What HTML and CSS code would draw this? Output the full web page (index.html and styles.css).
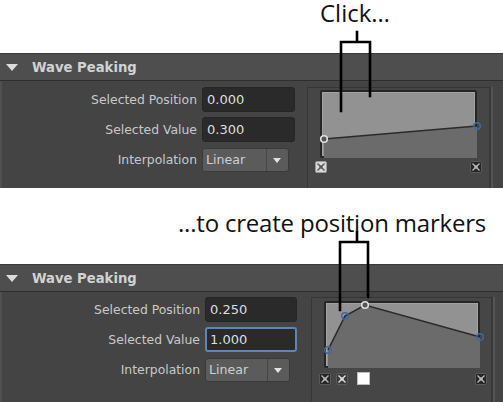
FILE: index.html
```html
<!DOCTYPE html>
<html lang="en">
<head>
  <meta charset="UTF-8">
  <title>Wave Peaking - position markers</title>
  <link rel="stylesheet" href="styles.css">
</head>
<body>

  <section class="shot shot-click">
    <p class="callout">Click…</p>

    <div class="panel">
      <div class="panel-head">
        <span class="caret"></span>
        <span class="panel-title">Wave Peaking</span>
      </div>
      <div class="panel-body">
        <div class="fields">
          <label>Selected Position</label>
          <div class="field">0.000</div>
          <label>Selected Value</label>
          <div class="field">0.300</div>
          <label>Interpolation</label>
          <div class="dropdown"><span>Linear</span><i class="dd-arrow"></i></div>
        </div>

        <div class="ramp-frame">
          <div class="ramp">
            <svg viewBox="0 0 153 64" width="153" height="64">
              <polygon points="0,45 153,32 153,64 0,64" fill="#6b6b6b"/>
              <polyline points="0,45 153,32" fill="none" stroke="#2b2b2b" stroke-width="1.6"/>
              <circle cx="0" cy="45" r="3.3" fill="#555" stroke="#e0e0e0" stroke-width="1.6"/>
              <circle cx="153" cy="32" r="3.3" fill="none" stroke="#3d6b9e" stroke-width="1.4"/>
            </svg>
          </div>
          <div class="ramp-tools">
            <svg class="tool tool-light" viewBox="0 0 12 12"><rect x="0.5" y="0.5" width="11" height="11" rx="1.5"/><path d="M2.5 2.5 L9.5 9.5 M9.5 2.5 L2.5 9.5"/><rect class="dot" x="4.5" y="4.5" width="3" height="3"/></svg>
            <svg class="tool" viewBox="0 0 12 12"><rect x="0.5" y="0.5" width="11" height="11" rx="1.5"/><path d="M2.5 2.5 L9.5 9.5 M9.5 2.5 L2.5 9.5"/><rect class="dot" x="4.5" y="4.5" width="3" height="3"/></svg>
          </div>
        </div>
      </div>
    </div>

    <svg class="bracket" width="503" height="200">
      <path d="M357 32 V42 M341 111 V42 H370 V96"/>
    </svg>
  </section>

  <section class="shot shot-markers">
    <p class="callout">...to create position markers</p>

    <div class="panel">
      <div class="panel-head">
        <span class="caret"></span>
        <span class="panel-title">Wave Peaking</span>
      </div>
      <div class="panel-body">
        <div class="fields">
          <label>Selected Position</label>
          <div class="field">0.250</div>
          <label>Selected Value</label>
          <div class="field focused">1.000</div>
          <label>Interpolation</label>
          <div class="dropdown"><span>Linear</span><i class="dd-arrow"></i></div>
        </div>

        <div class="ramp-frame">
          <div class="ramp">
            <svg viewBox="0 0 152 63" width="152" height="63">
              <polygon points="0,45 17,11 37,0 152,32 152,63 0,63" fill="#6b6b6b"/>
              <polyline points="0,45 17,11 37,0 152,32" fill="none" stroke="#2b2b2b" stroke-width="1.6"/>
              <circle cx="0" cy="45" r="3.3" fill="none" stroke="#3d6b9e" stroke-width="1.4"/>
              <circle cx="17" cy="11" r="3.3" fill="none" stroke="#3d6b9e" stroke-width="1.4"/>
              <circle cx="152" cy="32" r="3.3" fill="none" stroke="#3d6b9e" stroke-width="1.4"/>
              <circle cx="37" cy="0" r="3.3" fill="#555" stroke="#e0e0e0" stroke-width="1.6"/>
            </svg>
          </div>
          <div class="ramp-tools">
            <svg class="tool" viewBox="0 0 12 12"><rect x="0.5" y="0.5" width="11" height="11" rx="1.5"/><path d="M2.5 2.5 L9.5 9.5 M9.5 2.5 L2.5 9.5"/><rect class="dot" x="4.5" y="4.5" width="3" height="3"/></svg>
            <svg class="tool tool-mid" viewBox="0 0 12 12"><rect x="0.5" y="0.5" width="11" height="11" rx="1.5"/><path d="M2.5 2.5 L9.5 9.5 M9.5 2.5 L2.5 9.5"/><rect class="dot" x="4.5" y="4.5" width="3" height="3"/></svg>
            <span class="swatch"></span>
            <svg class="tool tool-end" viewBox="0 0 12 12"><rect x="0.5" y="0.5" width="11" height="11" rx="1.5"/><path d="M2.5 2.5 L9.5 9.5 M9.5 2.5 L2.5 9.5"/><rect class="dot" x="4.5" y="4.5" width="3" height="3"/></svg>
          </div>
        </div>
      </div>
    </div>

    <svg class="bracket" width="503" height="200">
      <path d="M357 22 V32 M340 100 V32 H368 V87"/>
    </svg>
  </section>

</body>
</html>
```

FILE: styles.css
```css
:root {
  --head-bg: #4e4e4e;
  --body-bg: #444444;
  --label: #c9c9c9;
  --field-bg: #2a2a2a;
  --field-text: #dedede;
  --ramp-top: #929292;
  --ramp-bottom: #6b6b6b;
}

* {
  box-sizing: border-box;
}

body {
  margin: 0;
  width: 503px;
  height: 402px;
  overflow: hidden;
  background: #ffffff;
}

.shot {
  position: relative;
}

.shot-markers {
  margin-top: 22px;
}

.callout {
  margin: 0;
  height: 26px;
  line-height: 26px;
  font-family: "Open Sans", sans-serif;
  font-size: 24px;
  color: #111;
  white-space: nowrap;
}

.shot-click .callout {
  padding-left: 320px;
}

.shot-markers .callout {
  padding-left: 178px;
  letter-spacing: -0.2px;
}

.panel {
  margin-top: 27px;
  font-family: "DejaVu Sans", sans-serif;
}

.shot-markers .panel {
  margin-top: 28px;
}

.panel-head {
  display: flex;
  align-items: center;
  height: 28px;
  background: var(--head-bg);
  border-top: 1px solid #3a3a3a;
  border-bottom: 1px solid #2e2e2e;
}

.caret {
  width: 0;
  height: 0;
  margin: 0 14px 0 6px;
  border-left: 6.5px solid transparent;
  border-right: 6.5px solid transparent;
  border-top: 7px solid #dcdcdc;
}

.panel-title {
  font-size: 13.2px;
  font-weight: bold;
  color: #d2d2d2;
}

.panel-body {
  display: flex;
  height: 107px;
  background: var(--body-bg);
  border-left: 2px solid #505050;
}

.shot-markers .panel-body {
  height: 112px;
}

.fields {
  display: grid;
  grid-template-columns: 195px 93px;
  column-gap: 5px;
  row-gap: 5px;
  grid-auto-rows: 25px;
  align-items: center;
  padding-top: 6px;
  font-size: 12.4px;
}

.shot-markers .fields {
  grid-template-columns: 198px 92px;
  padding-top: 5px;
}

.fields label {
  text-align: right;
  color: var(--label);
}

.field {
  height: 25px;
  line-height: 23px;
  padding-left: 4px;
  background: var(--field-bg);
  border: 1px solid #262626;
  border-radius: 3px;
  color: var(--field-text);
  font-size: 13px;
}

.field.focused {
  border: 2px solid #5c86b6;
  line-height: 21px;
  padding-left: 3px;
}

.dropdown {
  display: flex;
  width: 87px;
  height: 24px;
  background: #5b5b5b;
  border: 1px solid #3a3a3a;
  border-radius: 3px;
  color: #cfcfcf;
  font-size: 12.6px;
}

.shot-markers .dropdown {
  width: 85px;
}

.dropdown span {
  flex: 1;
  line-height: 22px;
  padding-left: 3px;
  border-right: 1px solid #454545;
}

.dd-arrow {
  width: 21px;
  position: relative;
}

.dd-arrow::after {
  content: "";
  position: absolute;
  left: 6px;
  top: 9px;
  border-left: 4.5px solid transparent;
  border-right: 4.5px solid transparent;
  border-top: 5px solid #e2e2e2;
}

.ramp-frame {
  margin: 6px 0 0 12px;
  width: 184px;
  padding: 2px 0 0 12px;
  background: #464646;
  border-left: 1px solid #363636;
  border-top: 1px solid #363636;
  border-right: 2px solid #383838;
  box-shadow: 2px 0 0 #555;
}

.shot-markers .ramp-frame {
  margin: 5px 0 0 14px;
  width: 182px;
  padding: 3px 0 0 12px;
}

.ramp {
  display: flex;
  width: 157px;
  height: 68px;
  padding: 2px;
  background: var(--ramp-top);
  border: 2px solid #262626;
  border-radius: 2px;
  box-shadow: inset 0 0 0 1px #a2a2a2;
}

.shot-markers .ramp {
  width: 156px;
  height: 67px;
}

.ramp svg {
  overflow: visible;
}

.ramp-tools {
  display: flex;
  align-items: center;
  gap: 5px;
  width: 167px;
  margin: 3px 0 0 -5px;
}

.shot-markers .ramp-tools {
  width: 168px;
  margin-top: 4px;
  gap: 5px;
}

.tool {
  width: 12px;
  height: 12px;
}

.tool rect {
  fill: #252525;
  stroke: #5a5a5a;
  stroke-width: 1;
}

.tool path {
  stroke: #b8b8b8;
  stroke-width: 1.4;
}

.tool .dot {
  fill: #b8b8b8;
  stroke: none;
}

.tool-light rect {
  fill: #d8d8d8;
  stroke: #9a9a9a;
}

.tool-light path {
  stroke: #555;
}

.tool-light .dot {
  fill: #555;
}

.tool-mid rect {
  fill: #3a3a3a;
}

.tool-mid path {
  stroke: #e0e0e0;
}

.tool-mid .dot {
  fill: #e0e0e0;
}

.tool:last-child {
  margin-left: auto;
}

.swatch {
  width: 13px;
  height: 13px;
  margin-left: 4px;
  background: #fdfdfd;
  border: 1px solid #bbb;
}

.bracket {
  position: absolute;
  left: 0;
  top: 0;
  overflow: visible;
  pointer-events: none;
}

.bracket path {
  fill: none;
  stroke: #000;
  stroke-width: 2.6;
  stroke-linecap: square;
}
```
